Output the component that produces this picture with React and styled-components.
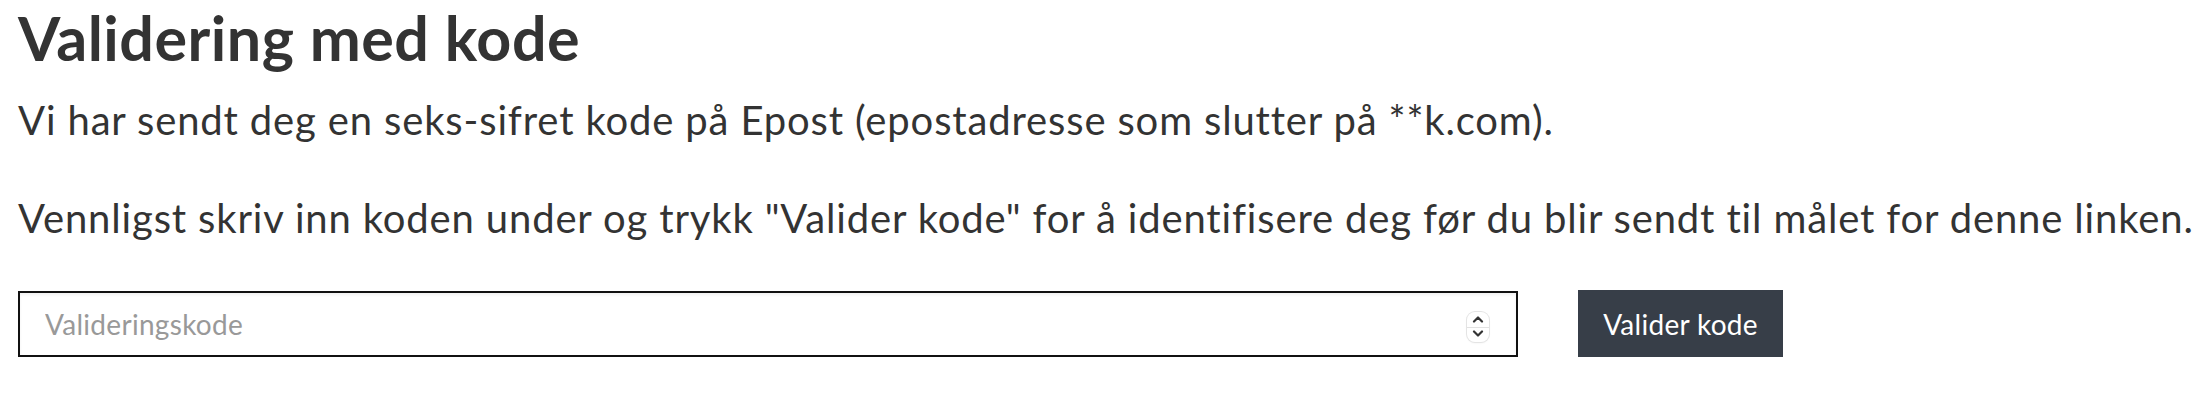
import React from "react";
import styled, { createGlobalStyle } from "styled-components";

const Global = createGlobalStyle`
  html, body { margin: 0; padding: 0; background: #fff; }
  body { font-family: Lato, "Open Sans", sans-serif; color: #333; }
  * { box-sizing: border-box; }
`;

const Page = styled.main`
  padding: 3px 18px 0 18px;
`;

const Title = styled.h1`
  margin: 0;
  font-size: 61px;
  line-height: 70px;
  letter-spacing: 0.5px;
  font-weight: 700;
  color: #333;
`;

const Paragraph = styled.p`
  margin: ${(p) => p.$top || 0}px 0 0 0;
  font-size: 40px;
  line-height: 48px;
  letter-spacing: 0.85px;
  font-weight: 400;
  color: #333;
  white-space: nowrap;
`;

const Form = styled.form`
  display: flex;
  align-items: center;
  gap: 60px;
  margin-top: 48px;
`;

const Field = styled.div`
  position: relative;
  width: 1500px;
  height: 66px;
`;

const Input = styled.input`
  width: 100%;
  height: 100%;
  border: 2px solid #111;
  border-radius: 0;
  box-shadow: inset 0 2px 3px rgba(0, 0, 0, 0.06);
  padding: 0 25px;
  font-family: Lato, sans-serif;
  font-size: 28px;
  letter-spacing: 0.3px;
  color: #333;
  outline: none;
  &::placeholder { color: #999; }
`;

const Spinner = styled.span`
  position: absolute;
  right: 29px;
  top: 21px;
  width: 22px;
  height: 30px;
  border-radius: 8px;
  background: #fff;
  box-shadow: 0 0 0 1px #e4e4e4, 0 1px 2px rgba(0, 0, 0, 0.08);
  display: flex;
  flex-direction: column;
  align-items: center;
  justify-content: space-around;
  &::after {
    content: "";
    position: absolute;
    left: 0;
    right: 0;
    top: 50%;
    height: 1px;
    background: #e2e2e2;
  }
`;

const Button = styled.button`
  width: 205px;
  height: 67px;
  background: #373e48;
  color: #fff;
  border: none;
  font-family: Lato, sans-serif;
  font-size: 28px;
  letter-spacing: 0.3px;
  font-weight: 400;
  padding: 0;
`;

const Chevron = ({ up }) => (
  <svg width="12" height="8" viewBox="0 0 12 8">
    <path
      d={up ? "M2 6.5 L6 2.5 L10 6.5" : "M2 1.5 L6 5.5 L10 1.5"}
      fill="none"
      stroke="#333"
      strokeWidth="2.2"
      strokeLinecap="round"
      strokeLinejoin="round"
    />
  </svg>
);

export default function App() {
  return (
    <>
      <Global />
      <Page>
        <Title>Validering med kode</Title>
        <Paragraph $top={23}>
          Vi har sendt deg en seks-sifret kode på Epost (epostadresse som slutter på **k.com).
        </Paragraph>
        <Paragraph $top={50}>
          Vennligst skriv inn koden under og trykk "Valider kode" for å identifisere deg før du blir sendt til målet for denne linken.
        </Paragraph>
        <Form onSubmit={(e) => e.preventDefault()}>
          <Field>
            <Input type="text" placeholder="Valideringskode" />
            <Spinner>
              <Chevron up />
              <Chevron />
            </Spinner>
          </Field>
          <Button type="submit">Valider kode</Button>
        </Form>
      </Page>
    </>
  );
}
